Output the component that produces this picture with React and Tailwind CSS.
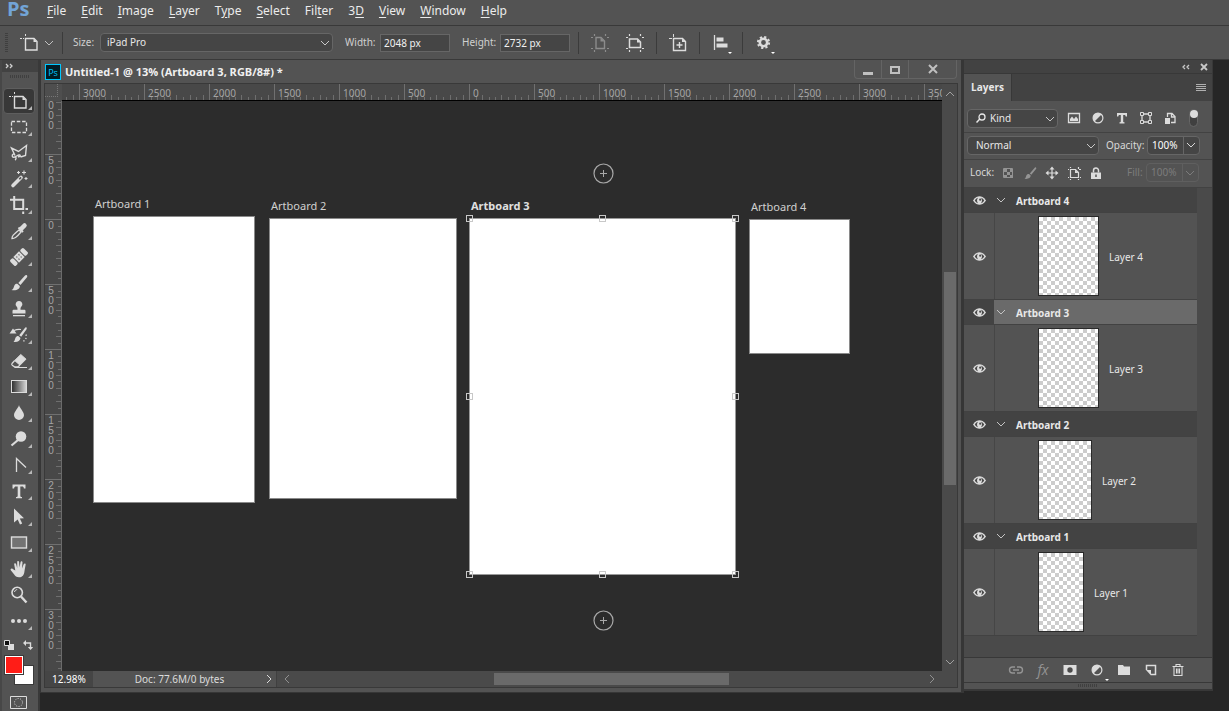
import { useState } from 'react';

const MENUS = [
  ['', 'F', 'ile'],
  ['', 'E', 'dit'],
  ['', 'I', 'mage'],
  ['', 'L', 'ayer'],
  ['T', 'y', 'pe'],
  ['', 'S', 'elect'],
  ['Fil', 't', 'er'],
  ['3', 'D', ''],
  ['', 'V', 'iew'],
  ['', 'W', 'indow'],
  ['', 'H', 'elp'],
];

const H_MARKS = ['', '3000', '2500', '2000', '1500', '1000', '500', '0', '500', '1000', '1500', '2000', '2500', '3000', '350'];
const V_MARKS = [' 000', '500', '0', '500', '1000', '1500', '2000', '2500', '3000'];

const ARTBOARDS = [
  { name: 'Artboard 1', box: 'left-[31px] top-[115px] w-[162px] h-[287px]' },
  { name: 'Artboard 2', box: 'left-[207px] top-[117px] w-[188px] h-[281px]' },
  { name: 'Artboard 3', box: 'left-[407px] top-[117px] w-[267px] h-[357px]', active: true },
  { name: 'Artboard 4', box: 'left-[687px] top-[118px] w-[101px] h-[135px]' },
];

const HANDLES = [
  '-left-1 -top-1',
  'left-1/2 -ml-1 -top-1',
  '-right-1 -top-1',
  '-left-1 top-1/2 -mt-1',
  '-right-1 top-1/2 -mt-1',
  '-left-1 -bottom-1',
  'left-1/2 -ml-1 -bottom-1',
  '-right-1 -bottom-1',
];

const LAYERS = [
  { group: 'Artboard 4', layer: 'Layer 4', thumb: 'w-[61px]' },
  { group: 'Artboard 3', layer: 'Layer 3', thumb: 'w-[61px]' },
  { group: 'Artboard 2', layer: 'Layer 2', thumb: 'w-[54px]' },
  { group: 'Artboard 1', layer: 'Layer 1', thumb: 'w-[46px]' },
];

function Svg({ size = 20, className = '', children }) {
  return (
    <svg width={size} height={size} viewBox={`0 0 ${size} ${size}`} fill="none" stroke="currentColor" className={`shrink-0 ${className}`} aria-hidden="true">
      {children}
    </svg>
  );
}

/* Tool drawings, all on a 20px grid */
const artboardIcon = (
  <>
    <path d="M5.5 5.5h8.5l3 3v8.500h-11.500z" strokeWidth="1.4" />
    <path d="M13.500 5.500V9H17z" fill="currentColor" stroke="none" />
    <path d="M0 5.500h4M5.500 1v3" strokeWidth="1" strokeDasharray="2 1" />
  </>
);

const TOOLS = [
  { name: 'Artboard', icon: artboardIcon },
  { name: 'Marquee', icon: <path d="M2.500 4.500h15v11h-15z" strokeWidth="1.3" strokeDasharray="3.5 1.8" /> },
  {
    name: 'Lasso',
    icon: <path d="M6 12.500 2.500 5l7 3.500L17.500 2.500l-1 10-5 1.500M4.500 11c-2 1-1.500 3.500.5 3.200s4-2.700 5.500-2.200.5 2-1.500 1.700M6.500 14c1 1 .5 2.500-.5 3" strokeWidth="1.4" />,
  },
  {
    name: 'Magic Wand',
    icon: (
      <>
        <path d="M4 16.500 12 8.500" strokeWidth="3.6" strokeLinecap="round" />
        <path d="m10.300 10.200 1.800-1.800" stroke="#535353" strokeWidth="1.6" />
        <path d="M9.500 2v3M8 3.500h3M15 1.500v4M13 3.500h4M17 8v3M15.500 9.500h3" strokeWidth="1.1" />
      </>
    ),
  },
  { name: 'Crop', icon: <path d="M1 4.800h13.200V15M5.200 1v13H15M16.500 14H19M14.200 16.500V19" strokeWidth="2" /> },
  {
    name: 'Eyedropper',
    icon: (
      <>
        <path d="M3 17.500c0-2.500 1-3.500 7-8.500l2 2c-5 6-6.500 6.500-9 6.500z" strokeWidth="1.3" />
        <path d="M9.500 6.500 14 11" strokeWidth="2" />
        <path d="m12.500 7.500 3-3" strokeWidth="4.5" strokeLinecap="round" />
      </>
    ),
  },
  {
    name: 'Healing Brush',
    icon: (
      <g transform="rotate(-45 10 10)">
        <rect x="0.500" y="6" width="4.500" height="8" rx="1.500" fill="currentColor" stroke="none" />
        <rect x="15" y="6" width="4.500" height="8" rx="1.500" fill="currentColor" stroke="none" />
        <rect x="6" y="6" width="8" height="8" fill="currentColor" stroke="none" />
        <path d="M8 8.500h1M11 8.500h1M8 11.500h1M11 11.500h1" stroke="#444" strokeWidth="1.2" />
      </g>
    ),
  },
  {
    name: 'Brush',
    icon: (
      <g fill="currentColor" stroke="none">
        <path d="M17.800 2.200c.8.700.5 1.500 0 2.300L11.500 12 9.300 10l6.500-7.300c.6-.6 1.400-1 2-.5z" />
        <path d="M8.300 10.800l2.500 2.300c.2 3-3.300 4.900-8.300 4 2.300-1.100 2-3 3-4.900.7-1.200 1.800-1.500 2.800-1.400z" />
      </g>
    ),
  },
  {
    name: 'Clone Stamp',
    icon: (
      <g fill="currentColor" stroke="none">
        <path d="M10 2a3.200 3.200 0 0 1 2.400 5.500c-.8.900-.9 1.600-.9 3.300h3.500c1 0 1.500.5 1.500 1.200v2.500h-13V12c0-.7.500-1.200 1.500-1.200h3.500c0-1.700-.1-2.400-.9-3.300A3.200 3.200 0 0 1 10 2z" />
        <path d="M4 16h12v1.300H4z" />
      </g>
    ),
  },
  {
    name: 'History Brush',
    icon: (
      <>
        <path d="M17.500 2.500c.5.500.3 1.500-.3 2.200l-5 7-2-1.500 5.500-7c.5-.6 1.200-1.200 1.800-.7zM9.300 11l2.200 1.900c-.5 3.100-3 4.500-7 4 1.500-1 1.200-2.500 2-4.200.6-1.200 1.700-1.800 2.800-1.700z" fill="currentColor" stroke="none" />
        <path d="M4 3.500 7.500 8.500H.500z" fill="currentColor" stroke="none" />
        <path d="M5 5.500c2.500-1.200 4.500-1.500 7-1" strokeWidth="1.2" />
        <path d="M17 9.500c1 4-1 6.500-4.500 7.500" strokeWidth="1.3" strokeDasharray="1.3 2" />
      </>
    ),
  },
  {
    name: 'Eraser',
    icon: (
      <>
        <path d="M11.800 3.500 17 8.200l-6 6-5.300-4.700z" fill="currentColor" strokeWidth="1" strokeLinejoin="round" />
        <path d="M5.700 9.500 3 12.500c-.5.700-.3 1.200.2 1.700l2.300 1.600h3.300l2.200-1.600M5.500 16.500H18" strokeWidth="1.2" />
      </>
    ),
  },
  {
    name: 'Gradient',
    icon: (
      <>
        <defs>
          <linearGradient id="tool-gradient">
            <stop offset="0" stopColor="#2c2c2c" />
            <stop offset="1" stopColor="#d8d8d8" />
          </linearGradient>
        </defs>
        <rect x="2.500" y="3.500" width="15" height="12" fill="url(#tool-gradient)" />
      </>
    ),
  },
  { name: 'Blur', icon: <path d="M10 2c.5 3 5 6.500 5 10.200A5 5 0 0 1 10 17a5 5 0 0 1-5-4.800C5 8.500 9.500 5 10 2z" fill="currentColor" stroke="none" /> },
  {
    name: 'Dodge',
    icon: (
      <>
        <circle cx="12" cy="7.500" r="5.300" fill="currentColor" stroke="none" />
        <path d="M9 11 2.500 16.500" strokeWidth="2.200" />
      </>
    ),
  },
  { name: 'Pen', icon: <path d="M7.500 17V3.500L17 12.500" strokeWidth="1.3" /> },
  { name: 'Type', icon: <path d="M3.500 3.500h13v4h-1.600c-.2-1.500-.6-2-1.900-2h-1.700v9.300c0 .9.400 1.200 1.700 1.200v1.200H7V16c1.300 0 1.700-.3 1.700-1.200V5.500H7c-1.300 0-1.700.5-1.900 2H3.500z" fill="currentColor" stroke="none" /> },
  { name: 'Path Selection', icon: <path d="M5 1.500 15 11.200l-4.200.3 2.400 5-2.200 1-2.300-5L5 15.500z" fill="currentColor" stroke="none" /> },
  { name: 'Rectangle', icon: <rect x="2.500" y="4" width="15" height="11" fill="#737373" strokeWidth="1.4" /> },
  {
    name: 'Hand',
    icon: <path d="M6.300 11.500 5.200 5.600c-.3-1.400 1.500-1.800 1.900-.5L8.200 9V3c0-1.400 1.800-1.400 1.900 0l.4 5.600L11.600 3c.3-1.300 2-1 1.900.4l-.5 6 1.800-4.300c.6-1.200 2.100-.6 1.800.6L15.500 12c-.4 4-2 6.300-5.500 6.300-2.500 0-3.800-.9-5-3l-3.200-4c-.8-1.200.8-2.300 1.900-1.300z" fill="currentColor" stroke="none" />,
  },
  {
    name: 'Zoom',
    icon: (
      <>
        <circle cx="8.200" cy="7.500" r="5.200" strokeWidth="1.6" />
        <path d="M5.500 7c.3-1.500 1.300-2.300 2.700-2.400" strokeWidth="1" />
        <path d="m12 11.500 5.500 6" strokeWidth="2.400" />
      </>
    ),
  },
  {
    name: 'Edit Toolbar',
    icon: (
      <g fill="currentColor" stroke="none">
        <circle cx="4" cy="10" r="2" />
        <circle cx="10" cy="10" r="2" />
        <circle cx="16" cy="10" r="2" />
      </g>
    ),
  },
];

function Chevron({ className = '', dir = 'down' }) {
  const d = {
    down: 'M1 3l4 4 4-4',
    up: 'M1 7l4-4 4 4',
    left: 'M7 1 3 5l4 4',
    right: 'M3 1l4 4-4 4',
  }[dir];
  return (
    <Svg size={10} className={className}>
      <path d={d} />
    </Svg>
  );
}

function Dropdown({ id, value, className = '', pad = 'pl-2' }) {
  return (
    <div className={`relative ${className}`}>
      <select id={id} aria-label={id} defaultValue={value} className={`block h-[19px] w-full appearance-none rounded-sm border border-[#666] bg-[#454545] ${pad} pr-5 text-[10px] text-[#e8e8e8] outline-none`}>
        <option>{value}</option>
      </select>
      <Chevron className="pointer-events-none absolute top-[5px] right-[3px] text-[#c8c8c8]" />
    </div>
  );
}

function Divider() {
  return <div className="h-[22px] w-px shrink-0 bg-[#3b3b3b]" />;
}

function MenuBar() {
  return (
    <nav className="flex h-[26px] items-start border-b border-[#393939] pl-[7px]">
      <span className="w-[40px] font-['Open_Sans'] text-[20px] leading-[18px] font-bold text-[#72a4d6]">Ps</span>
      <div className="flex gap-[15px]">
        {MENUS.map(([pre, key, post]) => (
          <button key={pre + key + post} className="h-[22px] text-[12px] leading-[22px] text-[#ececec]">
            {pre}
            <u className="underline-offset-2">{key}</u>
            {post}
          </button>
        ))}
      </div>
    </nav>
  );
}

function OptionButton({ label, dim, arrow, children }) {
  return (
    <button aria-label={label} className={`relative ${dim ? 'text-[#8c8c8c]' : 'text-[#dcdcdc]'}`}>
      <Svg>{children}</Svg>
      {arrow && <span className="absolute -right-px -bottom-px border-x-2 border-t-2 border-x-transparent border-t-white" />}
    </button>
  );
}

const orientationMarks = <path d="M4.500 1v2M15.500 1v2M4.500 17v2M15.500 17v2M1 4.500h2M17 4.500h2M1 15.500h2M17 15.500h2" strokeWidth="1.2" />;

function OptionsBar() {
  return (
    <div className="flex h-[34px] items-center border-b border-[#393939] pl-[5px] text-[10px] text-[#d0d0d0]">
      <div className="h-[20px] w-[3px] bg-[repeating-linear-gradient(#3f3f3f_0_1px,transparent_1px_2px)]" />
      <button aria-label="Tool preset" className="ml-3 flex items-center gap-1 text-[#e0e0e0]">
        <Svg>{artboardIcon}</Svg>
        <Chevron className="text-[#c0c0c0]" />
      </button>
      <div className="ml-2">
        <Divider />
      </div>
      <label htmlFor="Size" className="ml-[10px] w-[27px]">Size:</label>
      <Dropdown id="Size" value="iPad Pro" className="w-[233px]" pad="pl-1.5" />
      <label htmlFor="width" className="ml-3 w-[35px]">Width:</label>
      <input id="width" defaultValue="2048 px" className="h-[18px] w-[70px] border border-[#666] bg-[#454545] px-[3px] text-[#f0f0f0] outline-none" />
      <label htmlFor="height" className="ml-3 w-[38px]">Height:</label>
      <input id="height" defaultValue="2732 px" className="h-[18px] w-[70px] border border-[#666] bg-[#454545] px-[3px] text-[#f0f0f0] outline-none" />
      <div className="ml-2 flex items-center gap-[11px]">
        <Divider />
        <div className="flex gap-[15px]">
          <OptionButton label="Portrait" dim>
            {orientationMarks}
            <path d="M6 4.500h5l3.500 3.500v7.500H6z" strokeWidth="1.4" />
            <path d="M10.500 4.500V8.500h4z" fill="currentColor" stroke="none" />
          </OptionButton>
          <OptionButton label="Landscape">
            {orientationMarks}
            <path d="M4.500 6h8l3 3v5.500h-11z" strokeWidth="1.5" />
            <path d="M12 6v3.500h4z" fill="currentColor" stroke="none" />
          </OptionButton>
        </div>
        <Divider />
        <OptionButton label="Add artboard">
          <path d="M5.500 5.500h9l3 3v9h-12zM11.500 9v6M8.500 12h6" strokeWidth="1.4" />
          <path d="M14 5.500v3.500h4z" fill="currentColor" stroke="none" />
          <path d="M1 5.500h3M5.500 1v3" strokeWidth="1" />
        </OptionButton>
        <Divider />
        <OptionButton label="Align" arrow>
          <path d="M3.500 2v15" strokeWidth="1.3" />
          <path d="M5.500 4.500h7v4h-7zM5.500 10.500h11v4h-11z" fill="currentColor" stroke="none" />
        </OptionButton>
        <Divider />
        <OptionButton label="Settings" arrow>
          <circle cx="9.500" cy="9.500" r="3.700" strokeWidth="2.6" />
          <circle cx="9.500" cy="9.500" r="5.600" strokeWidth="2" strokeDasharray="2.2 2.198" />
        </OptionButton>
      </div>
    </div>
  );
}

function Toolbar() {
  const [active, setActive] = useState('Artboard');
  return (
    <aside className="flex w-[40px] shrink-0 flex-col border-r-2 border-l-2 border-r-[#393939] border-l-[#474747] bg-[#535353] text-[#dcdcdc]">
      <div className="flex h-[12px] items-center bg-[#424242] pl-[3px]">
        <Svg size={10} className="text-[#d0d0d0]">
          <path d="M1 3l2 2-2 2M5 3l2 2-2 2" strokeWidth="1.3" />
        </Svg>
      </div>
      <div className="mx-auto mt-[3px] mb-[10px] h-[3px] w-[20px] bg-[repeating-linear-gradient(90deg,#404040_0_1px,transparent_1px_2px)]" />
      {TOOLS.map(tool => (
        <button
          key={tool.name}
          aria-label={tool.name}
          onClick={() => setActive(tool.name)}
          className={`relative ml-px flex h-[26px] w-[32px] items-center justify-center rounded-sm border ${active === tool.name ? 'border-[#5e5e5e] bg-[#383838]' : 'border-transparent'}`}
        >
          <Svg>{tool.icon}</Svg>
          {tool.name !== 'Zoom' && (
            <Svg size={4} className="absolute right-[2px] bottom-[3px] text-[#b8b8b8]">
              <path d="M4 0v4H0z" fill="currentColor" stroke="none" />
            </Svg>
          )}
        </button>
      ))}
      <div className="mt-1 flex h-[14px] items-center justify-between pr-[5px] pl-[2px]">
        <button aria-label="Default colors">
          <Svg size={10}>
            <path d="M4 4h6v6H4z" fill="currentColor" stroke="none" />
            <path d="M.5.5h5v5h-5z" fill="#111" />
          </Svg>
        </button>
        <button aria-label="Swap colors">
          <Svg size={10}>
            <path d="M1 3h6.500v5" strokeWidth="1.4" />
            <path d="M3 0v6L0 3zM4.800 7h5.400L7.500 10z" fill="currentColor" stroke="none" />
          </Svg>
        </button>
      </div>
      <div className="relative mt-1 h-[30px]">
        <button aria-label="Background color" className="absolute top-[9px] left-[12px] size-[20px] border border-[#3a3a3a] bg-white" />
        <button aria-label="Foreground color" className="absolute top-0 left-[3px] size-[18px] border border-white bg-[#ff1d17] outline outline-[#3a3a3a]" />
      </div>
      <button aria-label="Quick mask" className="mt-[10px] ml-[8px]">
        <svg width="17" height="14" viewBox="0 0 17 14" fill="none" stroke="currentColor" aria-hidden="true">
          <path d="M.5.5h16v12H.5z" />
          <circle cx="8.500" cy="6.500" r="4" strokeDasharray="1 1.500" />
        </svg>
      </button>
    </aside>
  );
}

function HorizontalRuler() {
  return (
    <div className="flex h-[17px] min-w-0 flex-1 overflow-hidden border-b border-black bg-[#484848]">
      {H_MARKS.map((mark, i) => (
        <div key={i} className={`relative w-[65px] shrink-0 border-l border-[#707070] pl-[3px] text-[10px] leading-[18px] text-[#a4a4a4] ${i === 0 ? '-ml-[48px]' : ''}`}>
          <svg width="64" height="5" className="absolute bottom-0 left-0" stroke="#6e6e6e" shapeRendering="crispEdges" aria-hidden="true">
            <path d="M6.500 2v3M12.500 0v5M19.500 2v3M25.500 2v3M31.500 0v5M38.500 2v3M45.500 0v5M51.500 2v3M58.500 0v5" />
          </svg>
          <span className="relative">{mark}</span>
        </div>
      ))}
    </div>
  );
}

function VerticalRuler() {
  return (
    <div className="w-[17px] shrink-0 overflow-hidden border-r border-[#6a6a6a] bg-[#484848]">
      {V_MARKS.map((mark, i) => (
        <div key={i} className={`relative h-[65px] border-t border-[#707070] pt-px pl-[2px] font-['Liberation_Sans'] text-[10px] leading-[10px] text-[#a4a4a4] ${i === 0 ? '-mt-[12px]' : ''}`}>
          <svg width="5" height="64" className="absolute top-0 right-0" stroke="#6e6e6e" shapeRendering="crispEdges" aria-hidden="true">
            <path d="M2 6.500h3M0 12.500h5M2 19.500h3M0 25.500h5M2 31.500h3M0 38.500h5M2 45.500h3M0 51.500h5M2 58.500h3" />
          </svg>
          {[...mark].map((digit, n) => (
            <div key={n} className="h-[10px] w-2 text-center">{digit}</div>
          ))}
        </div>
      ))}
    </div>
  );
}

function AddCircle({ className }) {
  return (
    <button aria-label="Add artboard beside" className={`absolute text-[#a8a8a8] ${className}`}>
      <Svg size={21}>
        <circle cx="10.500" cy="10.500" r="9.500" strokeWidth="1.2" />
        <path d="M10.500 7v7M7 10.500h7" />
      </Svg>
    </button>
  );
}

function Canvas() {
  return (
    <div className="relative min-w-0 flex-1 overflow-hidden bg-[#2c2c2c]">
      {ARTBOARDS.map(board => (
        <div key={board.name} className={`absolute border bg-white ${board.active ? 'border-[#9a9a9a]' : 'border-[#8a8a8a]'} ${board.box}`}>
          <span className={`absolute -top-[21px] left-px text-[11px] leading-[16px] whitespace-nowrap ${board.active ? 'font-bold text-[#e0e0e0]' : 'text-[#d0d0d0]'}`}>
            {board.name}
          </span>
          {board.active && HANDLES.map(pos => <span key={pos} className={`absolute size-[7px] border border-[#c8c8c8] ${pos}`} />)}
        </div>
      ))}
      <AddCircle className="top-[62px] left-[531px]" />
      <AddCircle className="top-[509px] left-[531px]" />
    </div>
  );
}

function DocumentWindow() {
  return (
    <main className="mb-[18px] flex min-w-0 flex-1 flex-col border-r-3 border-b border-l border-[#363636] bg-[#535353] px-[3px] pb-1">
      <header className="flex h-[23px] items-start">
        <span className="mt-1 ml-px flex size-4 items-center justify-center border border-[#00c8ff] bg-[#001d26] font-['Open_Sans'] text-[9px] leading-none text-[#00c8ff]">Ps</span>
        <h1 className="ml-1 flex-1 font-['Open_Sans'] text-[11px] leading-[24px] font-bold whitespace-nowrap text-[#f0f0f0]">Untitled-1 @ 13% (Artboard 3, RGB/8#) *</h1>
        <div className="mr-px flex h-[19px] divide-x divide-[#646464] rounded-b border border-t-0 border-[#646464] text-[#c0c0c0]">
          <button aria-label="Minimize" className="w-[27px] pt-[9px]">
            <span className="mx-auto block h-[3px] w-[10px] bg-current" />
          </button>
          <button aria-label="Restore" className="w-[27px] pt-px">
            <span className="mx-auto block h-[8px] w-[10px] border-2 border-current" />
          </button>
          <button aria-label="Close" className="flex w-[47px] items-center justify-center">
            <Svg size={10}>
              <path d="m1 1 8 8M9 1 1 9" strokeWidth="2" />
            </Svg>
          </button>
        </div>
      </header>

      <div className="flex flex-1 border border-b-0 border-[#393939]">
        <div className="flex min-w-0 flex-1 flex-col">
          <div className="flex">
            <div className="h-[17px] w-[17px] shrink-0 bg-[#4e4e4e]">
              <div className="h-[13px] w-[13px] border-r border-b border-dotted border-[#777]" />
            </div>
            <HorizontalRuler />
          </div>
          <div className="flex flex-1">
            {/* the marks run on past the status bar, so they are clipped to this height */}
            <div className="relative w-[17px] shrink-0">
              <div className="absolute inset-0 flex">
                <VerticalRuler />
              </div>
            </div>
            <Canvas />
          </div>
        </div>
        <div className="flex w-[15px] shrink-0 flex-col items-center bg-[#4a4a4a] pt-[5px] pb-1 text-[#a0a0a0]">
          <Chevron dir="up" />
          <div className="grow-[172]" />
          <div className="w-[12px] grow-[212] bg-[#6a6a6a]" />
          <div className="grow-[171]" />
          <Chevron />
        </div>
      </div>

      <footer className="flex h-[17px] items-center border-x border-b border-[#393939] bg-[#4a4a4a] text-[10px] text-[#dcdcdc]">
        <input aria-label="Zoom level" defaultValue="12.98%" className="h-full w-[48px] bg-[#454545] pl-[7px] text-white outline-none" />
        <button className="relative h-full w-[184px] border-r border-[#404040] bg-[#535353] leading-[16px]">
          <span className="pr-2.5">Doc: 77.6M/0 bytes</span>
          <Chevron dir="right" className="absolute top-[3px] right-[2px]" />
        </button>
        <div className="flex h-full min-w-0 flex-1 items-center px-[5px] text-[#909090]">
          <Chevron dir="left" />
          <div className="grow-[200]" />
          <div className="h-[12px] grow-[233] bg-[#6a6a6a]" />
          <div className="grow-[196]" />
          <Chevron dir="right" />
        </div>
        <div className="w-[15px]" />
      </footer>
    </main>
  );
}

function Eye() {
  return (
    <svg width="13" height="9" viewBox="0 0 13 9" aria-hidden="true" className="text-[#dcdcdc]">
      <path d="M0 4.500C2.500 1 4.500.3 6.500.3S10.500 1 13 4.500C10.500 8 8.500 8.700 6.500 8.700S2.500 8 0 4.500z" fill="currentColor" />
      <path d="M1.800 4.500C3 2.600 4 1.900 5 1.700 3.700 3 3.700 6 5 7.300 4 7.100 3 6.400 1.800 4.500zM11.200 4.500C10 2.600 9 1.900 8 1.700 9.300 3 9.300 6 8 7.300c1-.2 2-.9 3.200-2.800z" fill="#4a4a4a" />
      <circle cx="7.200" cy="3.700" r="1.100" fill="#4a4a4a" />
    </svg>
  );
}

function Percent({ label, disabled }) {
  return (
    <div className={`flex items-center ${disabled ? 'text-[#7c7c7c]' : 'text-[#d8d8d8]'}`}>
      <label htmlFor={label} className={disabled ? 'w-[19px]' : 'w-[41px]'}>{label}:</label>
      <div className={`flex h-[19px] rounded-sm border ${disabled ? 'border-[#5f5f5f]' : 'border-[#666] bg-[#454545]'}`}>
        <input id={label} defaultValue="100%" disabled={disabled} className={`w-[35px] bg-transparent pl-1 outline-none ${disabled ? '' : 'text-white'}`} />
        <button aria-label={`${label} slider`} disabled={disabled} className={`w-[16px] border-l pl-[2px] ${disabled ? 'border-[#5f5f5f]' : 'border-[#666]'}`}>
          <Chevron />
        </button>
      </div>
    </div>
  );
}

function PanelIcon({ label, dim, size = 16, children }) {
  return (
    <button aria-label={label} className={dim ? 'text-[#949494]' : 'text-[#dcdcdc]'}>
      <Svg size={size}>{children}</Svg>
    </button>
  );
}

const adjustIcon = (
  <>
    <circle cx="8" cy="8" r="4.900" strokeWidth="1.2" />
    <path d="M4.500 11.500a5 5 0 0 1 0-7 5 5 0 0 1 7 0z" fill="currentColor" stroke="none" />
  </>
);

function LayersPanel() {
  const [selected, setSelected] = useState('Artboard 3');
  return (
    <section className="mr-4 mb-[20px] flex w-[249px] shrink-0 flex-col border-r border-b-2 border-[#383838] bg-[#535353] text-[10px] text-[#e8e8e8]">
      <div className="flex h-[13px] items-center justify-end gap-2 bg-[#424242] pr-[3px] text-[#c8c8c8]">
        <button aria-label="Collapse">
          <Svg size={10}>
            <path d="M4 3 2 5l2 2M8 3 6 5l2 2" strokeWidth="1.3" />
          </Svg>
        </button>
        <button aria-label="Close panel">
          <Svg size={10}>
            <path d="m2 2 6 6M8 2 2 8" strokeWidth="1.8" />
          </Svg>
        </button>
      </div>

      <div className="flex h-[28px] items-stretch justify-between border-t border-[#383838] bg-[#424242]">
        <button className="w-[48px] border-r border-[#383838] bg-[#535353] font-['Open_Sans'] font-bold">Layers</button>
        <button aria-label="Panel menu" className="pr-[6px] text-[#b0b0b0]">
          <Svg size={10}>
            <path d="M0 1.500h10M0 3.500h10M0 5.500h10M0 7.500h10" />
          </Svg>
        </button>
      </div>

      {/* Filter row */}
      <div className="flex h-[31px] items-center pt-[3px] pl-[3px]">
        <div className="relative">
          <Dropdown id="Kind" value="Kind" className="w-[91px]" pad="pl-[22px]" />
          <Svg size={10} className="pointer-events-none absolute top-1 left-[9px]">
            <circle cx="6" cy="4" r="3" strokeWidth="1.3" />
            <path d="M3.800 6 .5 9.500" strokeWidth="1.5" />
          </Svg>
        </div>
        <div className="ml-2 flex gap-2">
          <PanelIcon label="Pixel layers">
            <path d="M2.500 3.500h11v9h-11z" strokeWidth="1.3" />
            <path d="M4 11V9l2-2.500L8 9l2-2.500 2 2.500v2z" fill="currentColor" stroke="none" />
          </PanelIcon>
          <PanelIcon label="Adjustment layers">{adjustIcon}</PanelIcon>
          <PanelIcon label="Type layers">
            <path d="M3 3h10v3.500h-1.300c-.1-1-.4-1.500-1.400-1.500H9.200v6.500c0 .6.300.8 1.300.8v1.200h-5v-1.200c1 0 1.300-.2 1.300-.8V5H5.700c-1 0-1.300.5-1.400 1.500H3z" fill="currentColor" stroke="none" />
          </PanelIcon>
          <PanelIcon label="Shape layers">
            <path d="M4 4h8v8H4z" strokeWidth="1.3" />
            <path d="M2.500 2.500h3v3h-3zM10.500 2.500h3v3h-3zM2.500 10.500h3v3h-3zM10.500 10.500h3v3h-3z" fill="#535353" />
          </PanelIcon>
          <PanelIcon label="Smart objects">
            <path d="M5.500 7V3.500h4.500l3 3v6h-4M9.500 3.500V7H13" strokeWidth="1.3" />
            <path d="M3 8h5v6H3z" fill="currentColor" stroke="none" />
          </PanelIcon>
        </div>
        <button aria-label="Toggle filter" className="ml-[11px] flex h-[18px] w-[9px] items-start justify-center rounded-full border border-[#666] bg-[#404040]">
          <span className="block size-[8px] shrink-0 rounded-full bg-[#dcdcdc]" />
        </button>
      </div>

      {/* Blend mode */}
      <div className="flex h-[27px] items-center border-t border-[#424242] pb-[2px] pl-[3px]">
        <Dropdown id="Blend" value="Normal" className="mr-[7px] w-[132px]" />
        <Percent label="Opacity" />
      </div>

      {/* Locks */}
      <div className="flex h-[28px] items-center border-t border-[#424242] pb-[2px] pl-[6px]">
        <span className="w-[30px] text-[#d8d8d8]">Lock:</span>
        <div className="flex gap-[6px]">
          <PanelIcon label="Lock transparency" dim>
            <path d="M3.500 3.500h9v9h-9z" />
            <path d="M4 4h3v3H4zM10 4h3v3h-3zM7 7h3v3H7zM4 10h3v3H4zM10 10h3v3h-3z" fill="currentColor" stroke="none" />
          </PanelIcon>
          <PanelIcon label="Lock pixels" dim>
            <path d="M14 2.500c.5.500.3 1 0 1.500L9.300 9.800 7.800 8.400 12.500 3c.4-.5 1-.9 1.500-.5zM7 9l1.700 1.600c0 2.400-2.700 3.800-6.200 3.200 1.500-1 1.300-2 2-3.500C5 9.300 6 8.900 7 9z" fill="currentColor" stroke="none" />
          </PanelIcon>
          <PanelIcon label="Lock position">
            <path d="M8 3v10M3 8h10" strokeWidth="1.2" />
            <path d="M8 1.500 10.500 4.500h-5zM8 14.500 5.500 11.500h5zM1.500 8l3-2.500v5zM14.500 8l-3-2.500v5z" fill="currentColor" stroke="none" />
          </PanelIcon>
          <PanelIcon label="Lock nesting">
            <path d="M4.500 4.500h5l3 3v5h-8zM4.500 2v1M12.500 2v2M4.500 14v1M12.500 14v1M2 4.500h1M13 4.500h2M2 12.500h1M14 12.500h1" strokeWidth="1.2" />
            <path d="M9 4.500V8h3.500z" fill="currentColor" stroke="none" />
          </PanelIcon>
          <PanelIcon label="Lock all">
            <path d="M3 7.500h10V14H3z" fill="currentColor" stroke="none" />
            <path d="M5.500 7.500V5.500a2.500 2.500 0 0 1 5 0v2" strokeWidth="1.5" />
            <path d="M8 9.500v2.500" stroke="#535353" strokeWidth="1.5" />
          </PanelIcon>
        </div>
        <div className="ml-auto pr-[13px]">
          <Percent label="Fill" disabled />
        </div>
      </div>

      {/* Layer tree */}
      <div className="flex flex-1 border-t border-[#424242] bg-[#4a4a4a]">
        <ul className="flex-1">
          {LAYERS.map(item => {
            const isSelected = item.group === selected;
            return (
              <li key={item.group}>
                <div className="flex h-[25px] border-b border-[#424242] bg-[#434343]">
                  <button aria-label={`Toggle ${item.group}`} className="flex w-[30px] items-center justify-center">
                    <Eye />
                  </button>
                  <button onClick={() => setSelected(item.group)} className={`flex flex-1 items-center gap-[10px] pl-[2px] font-bold ${isSelected ? 'bg-[#6a6a6a]' : ''}`}>
                    <Chevron className="text-[#c4c4c4]" />
                    <span className="pt-[2px]">{item.group}</span>
                  </button>
                </div>
                <div className="flex h-[87px] border-b border-[#424242] bg-[#535353]">
                  <button aria-label={`Toggle ${item.layer}`} className="flex w-[30px] items-center justify-center">
                    <Eye />
                  </button>
                  <div className="flex flex-1 items-center gap-[10px] border-l border-[#464646] pl-[43px]">
                    <div className={`h-[80px] border border-[#2a2a2a] bg-[repeating-conic-gradient(#cccccc_0_25%,#ffffff_0_50%)] bg-[length:8px_8px] ${item.thumb}`} />
                    <span className="pt-[2px]">{item.layer}</span>
                  </div>
                </div>
              </li>
            );
          })}
        </ul>
        <div className="w-[15px] bg-[#4a4a4a]" />
      </div>

      <footer className="flex h-[25px] items-center gap-[11px] border-t border-[#383838] pl-[44px]">
        <PanelIcon label="Link layers" dim>
          <path d="M7 5H4.500a3 3 0 0 0 0 6H7M9 5h2.500a3 3 0 0 1 0 6H9M5 8h6" strokeWidth="1.4" />
        </PanelIcon>
        <button aria-label="Layer style" className="w-4 font-['Open_Sans'] text-[14px] leading-[16px] text-[#949494] italic">
          fx
        </button>
        <PanelIcon label="Add mask">
          <path d="M1.500 3h13v10h-13z" fill="currentColor" stroke="none" />
          <circle cx="8" cy="8" r="2.700" fill="#4a4a4a" stroke="none" />
        </PanelIcon>
        <div className="relative flex">
          <PanelIcon label="New adjustment">{adjustIcon}</PanelIcon>
          <span className="absolute -right-1 -bottom-[3px] border-x-2 border-t-2 border-x-transparent border-t-white" />
        </div>
        <PanelIcon label="New group">
          <path d="M2 3h5l1 1.500h6V13H2z" fill="currentColor" stroke="none" />
        </PanelIcon>
        <PanelIcon label="New layer">
          <path d="M3.500 8V3.500h9v9H8" strokeWidth="1.5" />
          <path d="M3 8h5v5.500z" fill="currentColor" stroke="none" />
        </PanelIcon>
        <PanelIcon label="Delete layer">
          <path d="M2.500 4.500h11M6 4V2.500h4V4M4 5v8.500h8V5M6.500 6.500v5M8 6.500v5M9.500 6.500v5" strokeWidth="1.1" />
        </PanelIcon>
      </footer>
      <div className="flex h-[7px] items-start justify-center border-t border-[#383838] pt-px">
        <div className="h-[3px] w-[20px] bg-[repeating-linear-gradient(90deg,#404040_0_1px,transparent_1px_2px)]" />
      </div>
    </section>
  );
}

export default function App() {
  return (
    <div className="flex min-h-screen flex-col bg-[#262626] font-['Noto_Sans','Liberation_Sans',sans-serif]">
      <div className="bg-[#535353]">
        <MenuBar />
        <OptionsBar />
      </div>
      <div className="flex flex-1">
        <Toolbar />
        <DocumentWindow />
        <LayersPanel />
      </div>
    </div>
  );
}
